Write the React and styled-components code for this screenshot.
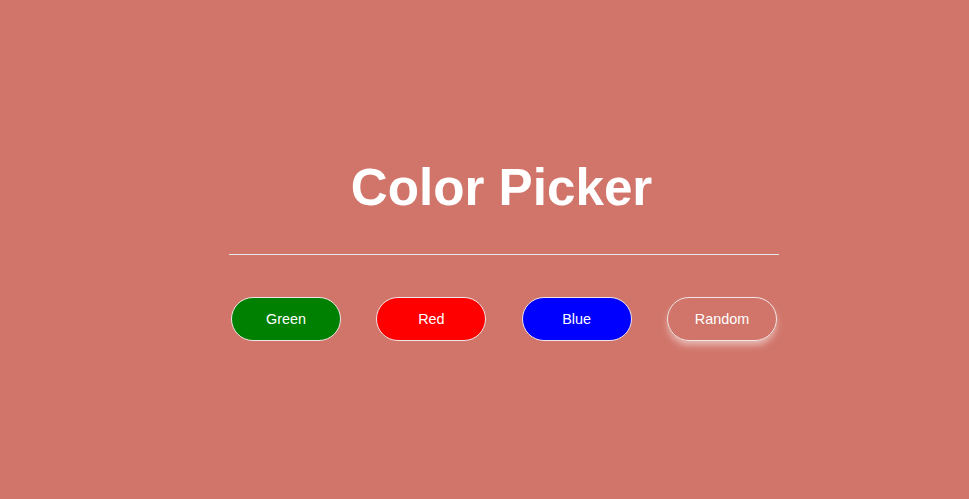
import React from "react";
import styled, { createGlobalStyle } from "styled-components";

const Global = createGlobalStyle`
  html, body { margin: 0; padding: 0; }
  body {
    background: #d1756a;
    font-family: "Liberation Sans", Arial, sans-serif;
  }
`;

const Page = styled.main`
  min-height: 100vh;
  box-sizing: border-box;
  padding-left: 39px;
  display: flex;
  align-items: center;
  justify-content: center;
`;

const Panel = styled.section`
  width: 550px;
  display: flex;
  flex-direction: column;
  align-items: center;
`;

const Title = styled.h1`
  margin: 0 5px 0 0;
  color: #ffffff;
  font-size: 51.2px;
  font-weight: 700;
  line-height: 59px;
  text-align: center;
`;

const Rule = styled.div`
  width: 550px;
  height: 1px;
  background: #e4e8ec;
  margin-top: 37px;
`;

const Row = styled.div`
  width: 546px;
  margin-top: 42px;
  display: flex;
  justify-content: space-between;
`;

const Pill = styled.button`
  box-sizing: border-box;
  width: 110px;
  height: 44px;
  border-radius: 22px;
  border: 1px solid #f0e6e6;
  background: ${(p) => p.$bg};
  color: #ffffff;
  font-family: "Liberation Sans", Arial, sans-serif;
  font-size: 14.4px;
  padding: 0;
  cursor: pointer;
  box-shadow: ${(p) => (p.$glow ? "0 5px 7px -1px rgba(255,255,255,0.5)" : "none")};
`;

export default function App() {
  return (
    <>
      <Global />
      <Page>
        <Panel>
          <Title>Color Picker</Title>
          <Rule />
          <Row>
            <Pill $bg="#008000">Green</Pill>
            <Pill $bg="#ff0000">Red</Pill>
            <Pill $bg="#0000ff">Blue</Pill>
            <Pill $bg="transparent" $glow>Random</Pill>
          </Row>
        </Panel>
      </Page>
    </>
  );
}
